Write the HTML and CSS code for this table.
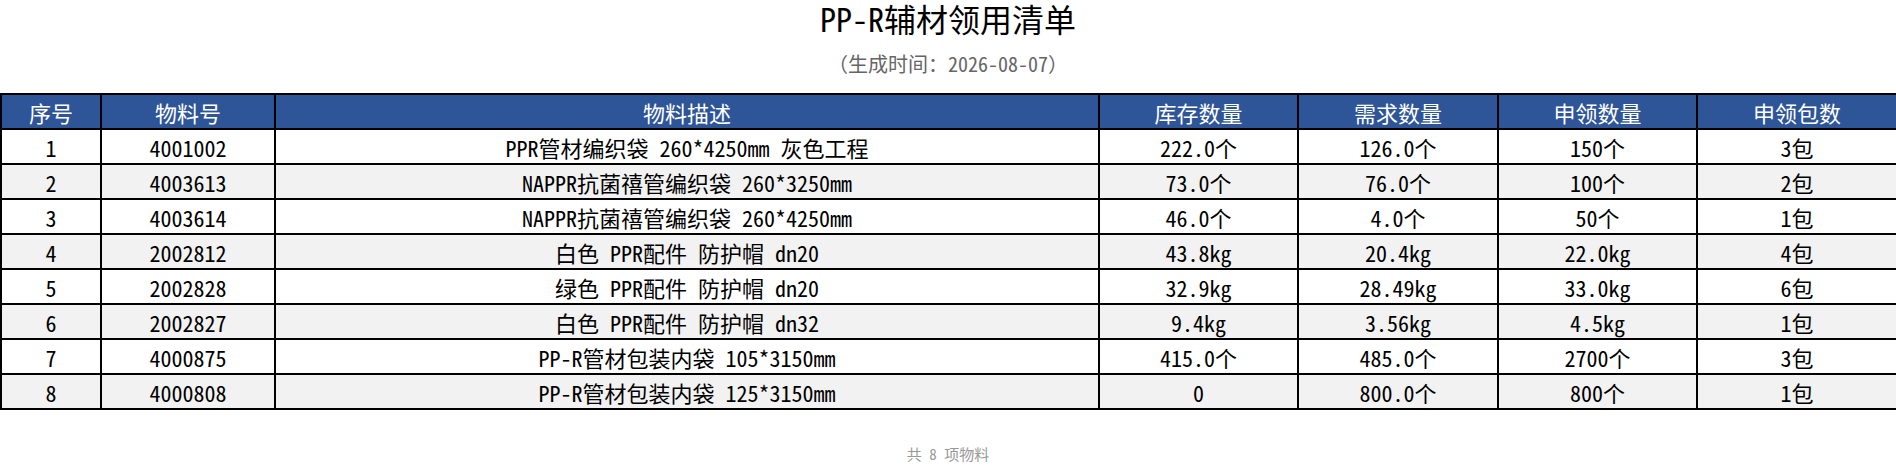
FILE: index.html
```html
<!DOCTYPE html>
<html lang="zh-CN">
<head>
<meta charset="utf-8">
<title>PP-R辅材领用清单</title>
<link rel="stylesheet" href="styles.css">
</head>
<body>
<div class="page">
  <h1 class="title">PP-R辅材领用清单</h1>
  <div class="subtitle">（生成时间：2026-08-07）</div>
  <table class="sheet">
    <colgroup>
      <col class="c-no"><col class="c-code"><col class="c-desc"><col class="c-q"><col class="c-q2"><col class="c-q"><col class="c-q2">
    </colgroup>
    <thead>
      <tr><th>序号</th><th>物料号</th><th>物料描述</th><th>库存数量</th><th>需求数量</th><th>申领数量</th><th>申领包数</th></tr>
    </thead>
    <tbody>
      <tr><td>1</td><td>4001002</td><td>PPR管材编织袋 260*4250mm 灰色工程</td><td>222.0个</td><td>126.0个</td><td>150个</td><td>3包</td></tr>
      <tr><td>2</td><td>4003613</td><td>NAPPR抗菌禧管编织袋 260*3250mm</td><td>73.0个</td><td>76.0个</td><td>100个</td><td>2包</td></tr>
      <tr><td>3</td><td>4003614</td><td>NAPPR抗菌禧管编织袋 260*4250mm</td><td>46.0个</td><td>4.0个</td><td>50个</td><td>1包</td></tr>
      <tr><td>4</td><td>2002812</td><td>白色 PPR配件 防护帽 dn20</td><td>43.8kg</td><td>20.4kg</td><td>22.0kg</td><td>4包</td></tr>
      <tr><td>5</td><td>2002828</td><td>绿色 PPR配件 防护帽 dn20</td><td>32.9kg</td><td>28.49kg</td><td>33.0kg</td><td>6包</td></tr>
      <tr><td>6</td><td>2002827</td><td>白色 PPR配件 防护帽 dn32</td><td>9.4kg</td><td>3.56kg</td><td>4.5kg</td><td>1包</td></tr>
      <tr><td>7</td><td>4000875</td><td>PP-R管材包装内袋 105*3150mm</td><td>415.0个</td><td>485.0个</td><td>2700个</td><td>3包</td></tr>
      <tr><td>8</td><td>4000808</td><td>PP-R管材包装内袋 125*3150mm</td><td>0</td><td>800.0个</td><td>800个</td><td>1包</td></tr>
    </tbody>
  </table>
  <div class="footer">共 8 项物料</div>
</div>
</body>
</html>
```

FILE: styles.css
```css
html, body {
  margin: 0;
  padding: 0;
  background: #ffffff;
}

body {
  font-family: "Noto Sans Mono CJK SC", "Noto Sans CJK SC", sans-serif;
  color: #000000;
}

.page {
  display: flex;
  flex-direction: column;
  width: 1896px;
}

.title {
  margin: 0;
  font-size: 32px;
  font-weight: 400;
  line-height: 36px;
  text-align: center;
  color: #000000;
}

.subtitle {
  margin-top: 14px;
  font-size: 20px;
  line-height: 28px;
  text-align: center;
  color: #666666;
}

.sheet {
  margin-top: 15px;
  width: 1896px;
  table-layout: fixed;
  border-collapse: collapse;
  border: 2px solid #000000;
}

.c-no { width: 100px; }
.c-code { width: 174px; }
.c-desc { width: 824px; }
.c-q { width: 199px; }
.c-q2 { width: 200px; }

.sheet th,
.sheet td {
  border: 2px solid #000000;
  height: 33px;
  padding: 0 4px;
  font-size: 22px;
  font-weight: 400;
  line-height: 26px;
  text-align: center;
  white-space: nowrap;
  overflow: hidden;
}

.sheet th {
  background: #2e5597;
  color: #ffffff;
}

.sheet tbody tr:nth-child(even) td {
  background: #f2f2f2;
}

.footer {
  margin-top: 34px;
  font-size: 15px;
  line-height: 20px;
  text-align: center;
  color: #999999;
}
```
